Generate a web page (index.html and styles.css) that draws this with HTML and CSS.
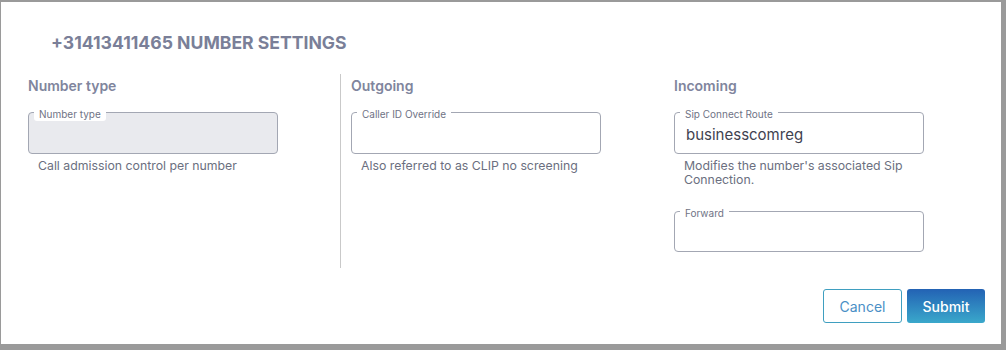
FILE: index.html
```html
<!DOCTYPE html>
<html lang="en">

<head>
    <meta charset="UTF-8" />
    <meta name="viewport" content="width=device-width, initial-scale=1" />
    <title>Number settings</title>
    <link rel="stylesheet" href="styles.css">
</head>

<body>
    <div class="modal">
        <h2 class="modal-title">+31413411465 NUMBER SETTINGS</h2>

        <div class="columns">
            <div class="column">
                <h3>Number type</h3>
                <div class="field disabled">
                    <span class="field-label">Number type</span>
                </div>
                <div class="helper">Call admission control per number</div>
            </div>

            <div class="column divided">
                <h3>Outgoing</h3>
                <div class="field">
                    <span class="field-label">Caller ID Override</span>
                </div>
                <div class="helper">Also referred to as CLIP no screening</div>
            </div>

            <div class="column">
                <h3>Incoming</h3>
                <div class="field">
                    <span class="field-label">Sip Connect Route</span>
                    <span class="field-value">businesscomreg</span>
                </div>
                <div class="helper">Modifies the number's associated Sip Connection.</div>

                <div class="field forward">
                    <span class="field-label">Forward</span>
                </div>
            </div>
        </div>

        <div class="actions">
            <button class="btn btn-outline">Cancel</button>
            <button class="btn btn-primary">Submit</button>
        </div>
    </div>
</body>

</html>
```

FILE: styles.css
```css
* {
    box-sizing: border-box;
}

body {
    margin: 0;
    background: #9a9a9a;
    font-family: Inter, "Noto Sans", Arial, sans-serif;
    height: 350px;
    overflow: hidden;
}

.modal {
    background: #fff;
    margin: 2px 5px 0 1px;
    height: 342px;
    padding: 30px 15px 0 16px;
}

.modal-title {
    margin: 0 0 20px;
    padding-left: 34px;
    font-size: 17.6px;
    line-height: 22px;
    font-weight: 700;
    color: #7a7f98;
}

.columns {
    display: grid;
    grid-template-columns: repeat(3, 323px);
    height: 194px;
}

.column {
    padding: 2px 0 0 11px;
}

.column.divided {
    border-left: 1px solid #c9c9c9;
    padding-left: 10px;
}

h3 {
    margin: 0 0 16px;
    font-size: 14px;
    line-height: 20px;
    font-weight: 600;
    color: #80859d;
}

.field {
    position: relative;
    width: 250px;
    height: 42px;
    border: 1px solid #a3a7b3;
    border-radius: 4px;
    display: flex;
    align-items: center;
    padding-left: 11px;
}

.field.disabled {
    background: #e9eaee;
}

.field.forward {
    height: 41px;
    margin-top: 24px;
}

.field-label {
    position: absolute;
    top: -5px;
    left: 5px;
    padding: 0 5px;
    background: #fff;
    border-radius: 3px;
    font-size: 10px;
    line-height: 13px;
    color: #6f7385;
}

.field-value {
    font-size: 15px;
    color: #3f4250;
    padding-top: 2px;
}

.helper {
    width: 240px;
    margin: 5px 0 0 10px;
    font-size: 12.3px;
    line-height: 14px;
    color: #6b6f80;
}

.actions {
    display: flex;
    justify-content: flex-end;
    gap: 5px;
    margin-top: 21px;
    padding-right: 1px;
}

.btn {
    height: 34px;
    width: 79px;
    font-family: inherit;
    font-size: 14px;
    border-radius: 3px;
    cursor: pointer;
}

.btn-outline {
    background: #fff;
    border: 1px solid #3f9fc0;
    color: #4a8fc6;
}

.btn-primary {
    width: 78px;
    border: none;
    color: #fff;
    font-weight: 500;
    background: linear-gradient(to bottom, #2362b4, #3aa8cb);
}
```
